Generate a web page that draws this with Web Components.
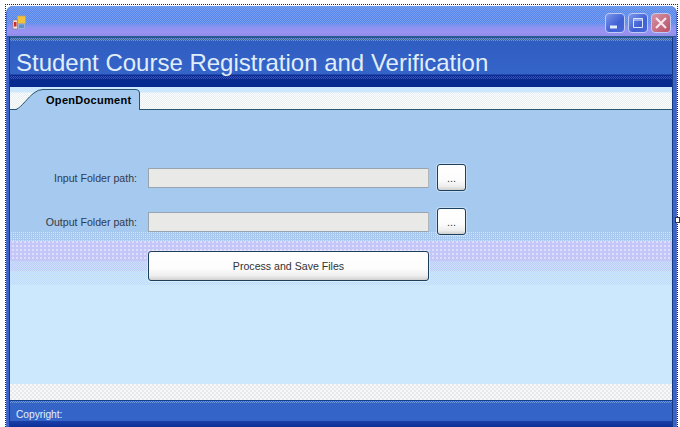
<!DOCTYPE html>
<html><head><meta charset="utf-8">
<style>
html,body{margin:0;padding:0;background:#fff;width:680px;height:427px;overflow:hidden}
body{font-family:"Liberation Sans",Arial,sans-serif}
</style></head><body>
<template id="t-win"><style>
:host{display:block;position:relative;box-sizing:border-box;width:673px;height:423px;margin:4px 0 0 5px;padding-top:1px;border:1px dotted #222;border-bottom:0;background:#fff}
.frame{display:flex;flex-direction:column;height:100%;box-sizing:border-box;border-radius:7px 7px 0 0;overflow:hidden;
 background:#3a62c8;padding:0 3px 0 2px;border-left:1px solid #4f6fd0;border-right:1px solid #5a70c8}
.inner{flex:1;display:flex;flex-direction:column;border:1px solid #123a80;border-width:0 1px;min-height:0}
.handle{position:absolute;right:-3px;top:212px;width:5px;height:6px;box-sizing:border-box;background:#fff;border:1px solid #333}
</style><div class="frame"><slot name="title"></slot><div class="inner"><slot></slot></div></div><div class="handle"></div></template>

<template id="t-titlebar"><style>
:host{display:flex;align-items:center;justify-content:space-between;height:31px;box-sizing:border-box;margin:0 -3px 0 -2px;padding:2px 5px 0 5px;
 background:linear-gradient(#6d9bea 0,rgba(109,155,234,0) 5px,rgba(109,155,234,0) 17px,#8a92f0 21px,#9c92f2 26px,#8f8ce8 30px,#2a5a98 30px),
 repeating-conic-gradient(#7a9cee 0 25%,#5588ee 0 50%) 0 0/2px 2px}
.btns{display:flex;gap:3px;align-items:center}
svg{display:block}
</style><svg width="15" height="15" viewBox="0 0 15 15">
<rect x="5.500" y="1" width="8" height="7.500" fill="#f2c23e" stroke="#c9a04a" stroke-width=".7"/>
<rect x="1" y="5" width="4.500" height="9" fill="#ece7da" stroke="#b06060" stroke-width=".6"/>
<rect x="2" y="7" width="2.500" height="4.500" fill="#d02a20"/>
<rect x="6.500" y="9" width="6" height="4.500" fill="#5f8fd0" stroke="#a9bcd8" stroke-width=".7"/>
</svg><div class="btns"><slot></slot></div></template>

<template id="t-capbtn"><style>
:host{display:block;width:20px;height:20px;box-sizing:border-box;border:1px solid #bccbf2;border-radius:4px;background:var(--bg,#4c6fdc)}
svg{display:block;width:18px;height:18px}
</style><svg viewBox="0 0 18 18"><path id="p" fill="none" stroke="#fff"/></svg></template>

<template id="t-header"><style>
:host{display:block;height:50px;box-sizing:border-box;
 background:linear-gradient(#2f5cc0 0,#3564c8 37px,#0c2c90 38px,#052a90 100%)}
.d{height:4px;border-top:1px solid #2a5a88;box-sizing:border-box;background:repeating-conic-gradient(#7096b8 0 25%,#3a5fb8 0 50%) 0 0/2px 2px}
.t{color:#e0edfa;font-size:24px;line-height:28px;padding:8px 0 0 6px;white-space:nowrap}
.d2{height:3px;margin-top:-1px;background:repeating-conic-gradient(#3a50c0 0 25%,#0c2c90 0 50%) 0 0/2px 2px}
</style><div class="d"></div><div class="t"><slot></slot></div><div class="d2"></div></template>

<template id="t-tabs"><style>
:host{display:block;height:23px;box-sizing:border-box;position:relative;border-bottom:1px solid #27566f;
 background:linear-gradient(#cde8fd 0,#cde8fd 5px,transparent 6px),repeating-conic-gradient(#fbfcfc 0 25%,#e9eef2 0 50%) 0 0/2px 2px,#fff}
.tab{position:absolute;left:0;top:2px;height:21px}
svg{display:block}
.l{position:absolute;left:36px;top:4px;font:bold 11px/14px "Liberation Sans",sans-serif;color:#000;letter-spacing:.3px}
</style><div class="tab"><svg width="134" height="21" viewBox="0 0 134 21"><path d="M6 21 C12 18 18 8 24 4 Q28 .5 33 .5 L126 .5 Q129.500 .5 129.500 4 L129.500 21 Z" fill="#a5c9ef"/><path d="M0 20.500 L6 20.500 C12 18 18 8 24 4 Q28 .5 33 .5 L126 .5 Q129.500 .5 129.500 4 L129.500 21" fill="none" stroke="#27566f"/></svg><span class="l"><slot></slot></span></div></template>

<template id="t-body"><style>
:host{flex:1;display:block;position:relative;box-sizing:border-box;min-height:0;padding-top:55px;background:#cbe8fd}
.bg{position:absolute;inset:0;display:flex;flex-direction:column}
.bg i{display:block}
.content{position:relative}
</style><div class="bg">
<i style="height:122px;background:#a5c9ef"></i>
<i style="height:9px;background:repeating-conic-gradient(#d6e2f6 0 25%,#a9c8f0 0 100%) 0 0/2px 2px"></i>
<i style="height:20px;background:repeating-conic-gradient(#dcdff9 0 25%,#c5c6f8 0 100%) 0 0/4px 4px"></i>
<i style="height:10px;background:repeating-conic-gradient(#c2ccf8 0 25%,#c8e0fc 0 50%) 0 0/2px 2px"></i>
<i style="height:14px;background:repeating-conic-gradient(#bedcfa 0 25%,#cbe8fd 0 50%) 0 0/2px 2px"></i>
<i style="flex:1;background:#cbe8fd"></i>
<i style="height:16px;background:repeating-conic-gradient(#e8e9ea 0 25%,#f8f8f8 0 50%) 0 0/4px 4px"></i>
</div><div class="content"><slot></slot></div></template>

<template id="t-row"><style>
:host{display:flex;align-items:center;height:26px;margin-bottom:18px}
.lab{width:127px;text-align:right;font-size:10.600px;color:#333a4a;white-space:nowrap}
.field{box-sizing:border-box;width:281px;height:20px;margin-left:11px;background:#e9e9e8;border:1px solid #98a4ae;border-right-color:#b0b6ba;border-radius:1px}
</style><span class="lab"><slot></slot></span><span class="field"></span><x-btn w="29" h="27" style="margin-left:8px;align-self:flex-end">...</x-btn></template>

<template id="t-btn"><style>
:host{display:inline-flex;align-items:center;justify-content:center;box-sizing:border-box;border:1px solid #1b3f5c;border-radius:3px;
 background:linear-gradient(#fff 0,#fcfcfc 60%,#eee 85%,#cfcfcf);font-size:10.600px;color:#333;box-shadow:0 0 0 1px rgba(255,255,255,.35)}
</style><slot></slot></template>

<template id="t-footer"><style>
:host{display:block;height:27px;box-sizing:border-box;border-top:1px solid #133f8a;color:#e4effb;font-size:10.200px;line-height:28px;padding-left:6px;position:relative;
 background:linear-gradient(#3564c8 0,#3564c8 20px,#1a3fa8 20px,#0f2f98 100%)}
:host::before{content:"";position:absolute;left:0;right:0;top:0;height:2px;background:repeating-conic-gradient(#6f9ad0 0 25%,#3564c8 0 50%) 0 0/2px 2px}
</style><slot></slot></template>

<app-window>
 <title-bar slot="title"><cap-btn kind="min"></cap-btn><cap-btn kind="max"></cap-btn><cap-btn kind="close"></cap-btn></title-bar>
 <app-header>Student Course Registration and Verification</app-header>
 <tab-strip>OpenDocument</tab-strip>
 <form-body>
  <form-row>Input Folder path:</form-row>
  <form-row>Output Folder path:</form-row>
  <x-btn w="281" h="30" style="margin-left:138px;margin-top:-2px">Process and Save Files</x-btn>
 </form-body>
 <app-footer>Copyright:</app-footer>
</app-window>
<script>
function reg(name,tid,init){customElements.define(name,class extends HTMLElement{constructor(){super();const s=this.attachShadow({mode:"open"});s.appendChild(document.getElementById(tid).content.cloneNode(true));}connectedCallback(){init&&init(this,this.shadowRoot);}});}
reg("app-window","t-win");
reg("title-bar","t-titlebar");
reg("cap-btn","t-capbtn",(h,s)=>{const k=h.getAttribute("kind"),p=s.getElementById("p");
 if(k==="min"){h.style.setProperty("--bg","linear-gradient(135deg,#7c97ea,#3f5fd4 60%,#4a68d8)");p.setAttribute("d","M4 13H11");p.setAttribute("stroke-width","3");p.setAttribute("stroke","#e4ecfb");}
 if(k==="max"){h.style.setProperty("--bg","linear-gradient(135deg,#7c97ea,#3f5fd4 60%,#4a68d8)");p.setAttribute("d","M4.500 4.500H13.500V13.500H4.500Z M4.500 6H13.500");p.setAttribute("stroke","#dbe6fa");}
 if(k==="close"){h.style.setProperty("--bg","linear-gradient(135deg,#d892a4,#b85068)");p.setAttribute("d","M4 4L14 14M14 4L4 14");p.setAttribute("stroke-width","2.200");p.setAttribute("stroke","#f4e8ee");}
});
reg("app-header","t-header");
reg("tab-strip","t-tabs");
reg("form-body","t-body");
reg("form-row","t-row");
reg("x-btn","t-btn",(h)=>{h.style.width=h.getAttribute("w")+"px";h.style.height=h.getAttribute("h")+"px";});
reg("app-footer","t-footer");
</script>
</body></html>
